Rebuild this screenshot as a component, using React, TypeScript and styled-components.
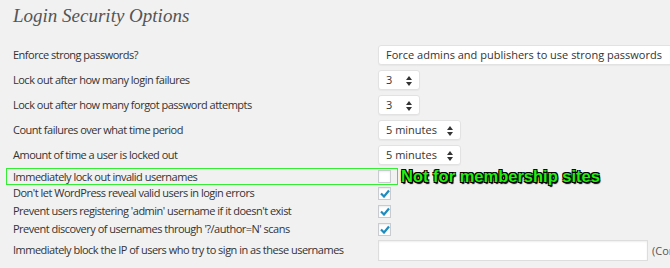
import styled, { createGlobalStyle } from 'styled-components';

const GlobalStyle = createGlobalStyle`
  html, body {
    margin: 0;
    padding: 0;
    background: #f1f1f1;
    overflow: hidden;
  }
  body {
    width: 670px;
    height: 268px;
  }
`;

const Page = styled.div`
  padding-left: 13px;
  font-family: 'Open Sans', 'Liberation Sans', sans-serif;
  font-size: 11px;
  color: #333;
`;

const Title = styled.h3`
  margin: 0;
  height: 42px;
  padding-top: 5px;
  box-sizing: border-box;
  font-family: 'Liberation Serif', serif;
  font-style: italic;
  font-weight: normal;
  font-size: 19px;
  color: #555;
`;

const Row = styled.div<{ h: number }>`
  position: relative;
  display: grid;
  grid-template-columns: 365px max-content;
  align-items: center;
  height: ${(p) => p.h}px;
  white-space: nowrap;
`;

const Label = styled.div`
  font-size: 11px;
  letter-spacing: -0.5px;
  line-height: 14px;
`;

const Field = styled.div`
  display: flex;
  align-items: center;
  gap: 4px;
`;

const Select = styled.div<{ w?: number }>`
  position: relative;
  display: flex;
  align-items: center;
  box-sizing: border-box;
  height: 20px;
  width: ${(p) => (p.w ? `${p.w}px` : 'auto')};
  padding: 0 22px 0 7px;
  background: #fff;
  border: 1px solid #e2e2e2;
  border-radius: 3px;
  box-shadow: 0 1px 1px rgba(0, 0, 0, 0.04);
  color: #333;
`;

const Arrows = styled.svg`
  position: absolute;
  right: 7px;
  top: 5px;
`;

const Checkbox = styled.span`
  display: inline-flex;
  align-items: center;
  justify-content: center;
  box-sizing: border-box;
  width: 13px;
  height: 13px;
  background: #fff;
  border: 1px solid #c9cbce;
  box-shadow: inset 0 1px 2px rgba(0, 0, 0, 0.08);
`;

const TextInput = styled.div`
  box-sizing: border-box;
  width: 270px;
  height: 21px;
  background: #fff;
  border: 1px solid #ddd;
  box-shadow: inset 0 1px 2px rgba(0, 0, 0, 0.07);
`;

const Note = styled.span`
  color: #555;
`;

const Highlight = styled.div`
  position: absolute;
  left: -7px;
  top: 1px;
  width: 390px;
  height: 15px;
  border: 1px solid #33ee33;
  pointer-events: none;
`;

const Callout = styled.span`
  margin-left: 6px;
  font-family: 'Liberation Sans', Arial, sans-serif;
  font-weight: bold;
  font-size: 16.5px;
  color: #22ee11;
  text-shadow: -1px -1px 0 #000, 1px -1px 0 #000, -1px 1px 0 #000, 1px 1px 0 #000,
    1px 2px 1px #000;
`;

const SelectBox = ({ value, w }: { value: string; w?: number }) => (
  <Select w={w}>
    {value}
    <Arrows width="6" height="10" viewBox="0 0 6 10">
      <path d="M3 0 L6 4 L0 4 Z M0 6 L6 6 L3 10 Z" fill="#333" />
    </Arrows>
  </Select>
);

const Check = ({ checked }: { checked?: boolean }) => (
  <Checkbox>
    {checked && (
      <svg width="10" height="9" viewBox="0 0 10 9">
        <path d="M1 4.5 L4 7.5 L9 1.5" fill="none" stroke="#1e8cbe" strokeWidth="2.2" />
      </svg>
    )}
  </Checkbox>
);

export default function App() {
  return (
    <>
      <GlobalStyle />
      <Page>
        <Title>Login Security Options</Title>
        <Row h={25}>
          <Label>Enforce strong passwords?</Label>
          <Field>
            <SelectBox value="Force admins and publishers to use strong passwords" />
          </Field>
        </Row>
        <Row h={25}>
          <Label>Lock out after how many login failures</Label>
          <Field>
            <SelectBox value="3" w={42} />
          </Field>
        </Row>
        <Row h={25}>
          <Label>Lock out after how many forgot password attempts</Label>
          <Field>
            <SelectBox value="3" w={42} />
          </Field>
        </Row>
        <Row h={25}>
          <Label>Count failures over what time period</Label>
          <Field>
            <SelectBox value="5 minutes" w={83} />
          </Field>
        </Row>
        <Row h={25}>
          <Label>Amount of time a user is locked out</Label>
          <Field>
            <SelectBox value="5 minutes" w={83} />
          </Field>
        </Row>
        <Row h={17}>
          <Highlight />
          <Label>Immediately lock out invalid usernames</Label>
          <Field>
            <Check />
            <Callout>Not for membership sites</Callout>
          </Field>
        </Row>
        <Row h={18}>
          <Label>Don't let WordPress reveal valid users in login errors</Label>
          <Field>
            <Check checked />
          </Field>
        </Row>
        <Row h={18}>
          <Label>Prevent users registering 'admin' username if it doesn't exist</Label>
          <Field>
            <Check checked />
          </Field>
        </Row>
        <Row h={18}>
          <Label>Prevent discovery of usernames through '?/author=N' scans</Label>
          <Field>
            <Check checked />
          </Field>
        </Row>
        <Row h={24}>
          <Label>Immediately block the IP of users who try to sign in as these usernames</Label>
          <Field>
            <TextInput />
            <Note>(Comma separated list of usernames)</Note>
          </Field>
        </Row>
      </Page>
    </>
  );
}
